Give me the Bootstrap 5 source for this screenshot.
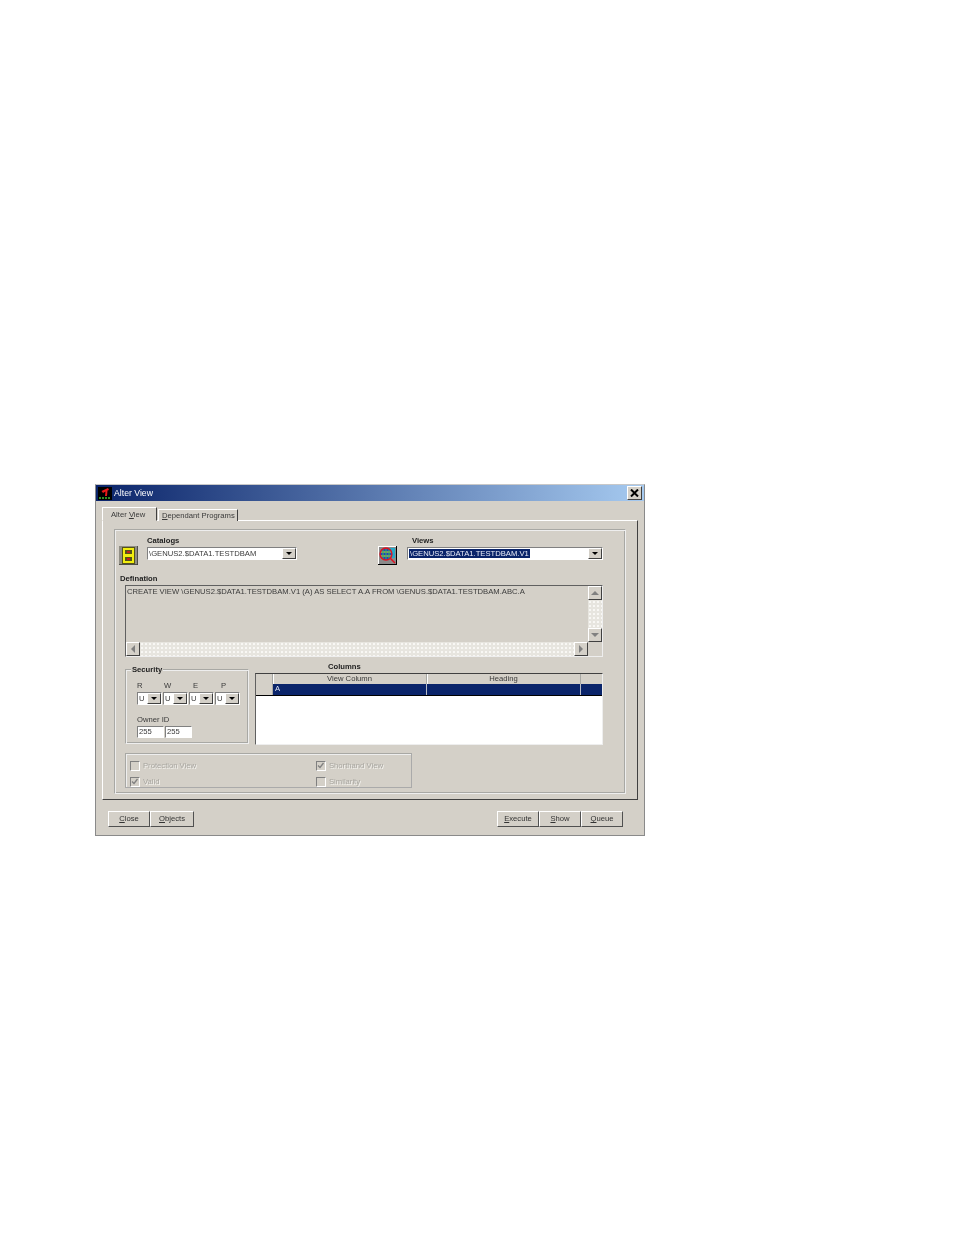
<!DOCTYPE html>
<html lang="en">
<head>
<meta charset="utf-8">
<title>Alter View</title>
<link href="https://cdn.jsdelivr.net/npm/bootstrap@5.3.0/dist/css/bootstrap.min.css" rel="stylesheet">
<style>
:root{--f:#d4d0c8;--d:#808080;--k:#404040;}
html,body{background:#fff;}
body{font-family:"Liberation Sans",Arial,sans-serif;font-size:7.66px;line-height:1;color:#3a3a3a;}
.stage{padding:484px 0 0 95px;}
.win{width:550px;height:352px;background:var(--f);border:1px solid #8a8a8a;border-top-color:#c8c8c8;filter:blur(.25px);}
.ttl{height:16px;background:linear-gradient(90deg,#0a246a,#a6caf0);color:#fff;font-size:8.7px;gap:2px;padding:0 2px 0 2px;}
.closer{width:15px;height:14px;background:var(--f);border:1px solid;border-color:#fff #404040 #404040 #fff;}
.tabrow{margin:6px 0 0 6px;height:14px;}
.tb{position:relative;z-index:2;height:14px;padding:2px 8px 0;background:var(--f);border:1px solid;border-color:#fff #404040 var(--f) #fff;}
.tb-on{width:55px;}
.tb-off{width:80px;height:12px;margin:2px 0 0 1px;border-bottom:0;border-left-color:#fff;padding:0 2px 0 3px;}
.pane{margin:-1px 6px 0 6px;height:280px;border:1px solid;border-color:#fff #404040 #404040 #fff;padding:8px 11px 0 11px;}
.grp{height:265px;border:1px solid;border-color:#a8a8a4 #eee #eee #a8a8a4;box-shadow:inset 1px 1px 0 #eee,inset -1px -1px 0 #a8a8a4;padding:5px 0 0 4px;}
.toprow{height:30px;}
.lbl-b{font-weight:700;height:12px;color:#222;padding-top:2px;}
.ico{width:19px;height:19px;margin-top:11px;display:block;}
.catcol{margin-left:9px;width:150px;}
.viewcol{margin-left:10px;width:196px;}
.ico-v{margin-left:81px;}
.lbl-view{padding-left:5px;}
.combo{height:13px;background:#fff;border:1px solid;border-color:#808080 #fff #fff #808080;padding:0 0 0 1px;}
.cbtxt{flex:1 1 auto;white-space:nowrap;overflow:hidden;line-height:11px;}
.sel{background:#0a246a;color:#e8ecf8;padding:0 1px;}
.arrow{width:14px;height:11px;flex:none;background:var(--f);border:1px solid;border-color:#fff #404040 #404040 #fff;}
.arrow::after{content:"";border:3px solid transparent;border-top:3px solid #000;border-bottom:0;}
.deflbl{margin:9px 0 0 1px;height:11px;padding-top:1px;color:#222;}
.defbox{margin-left:6px;width:478px;height:72px;border:1px solid;border-color:#606060 #eee #eee #606060;padding:0;}
.deftxt{flex:1 1 auto;padding:2px 1px;white-space:nowrap;}
.defmain{height:56px;}
.vbar{width:14px;flex:none;}
.dots{flex:1 1 auto;background-color:#e7e5df;background-image:radial-gradient(#f9f8f5 .7px,transparent .9px);background-size:4px 4px;}
.sb{width:14px;height:14px;flex:none;background:var(--f);border:1px solid;border-color:#fff #404040 #404040 #fff;}
.hbar{height:14px;margin-right:14px;}
.tri-u,.tri-d,.tri-l,.tri-r{width:0;height:0;border:4px solid transparent;}
.tri-u{border-bottom-color:#808080;border-top:0;}
.tri-d{border-top-color:#808080;border-bottom:0;}
.tri-l{border-right-color:#808080;border-left:0;}
.tri-r{border-left-color:#808080;border-right:0;}
.midrow{margin:6px 0 0 6px;height:82px;gap:6px;}
.sec{position:relative;margin-top:6px;width:124px;height:75px;border:1px solid;border-color:#a8a8a4 #eee #eee #a8a8a4;box-shadow:inset 1px 1px 0 #eee,inset -1px -1px 0 #a8a8a4;padding:12px 0 0 11px;}
.legend{position:absolute;top:-4px;left:5px;background:var(--f);padding:0 1px;font-weight:700;color:#222;}
.perm{width:26px;}
.perm-l{height:10px;}
.perm:nth-child(2) .perm-l{padding-left:1px;}
.perm:nth-child(3) .perm-l{padding-left:4px;}
.perm:nth-child(4) .perm-l{padding-left:6px;}
.combo-s{width:25px;}
.own{margin-top:10px;height:10px;padding-top:1px;}
.edits{margin-top:1px;gap:1px;}
.edt{width:27px;height:12px;background:#fff;border:1px solid;border-color:#808080 #fff #fff #808080;padding-left:1px;line-height:10px;}
.colcol{width:348px;}
.collbl{height:10px;color:#222;padding-left:73px;}
.gridbox{height:72px;background:#fff;border:1px solid;border-color:#404040 #eee #eee #606060;}
.gh{height:10px;background:var(--f);}
.gr{height:12px;background:#0a246a;color:#dfe5f5;border-bottom:1px solid #000;}
.gc0{width:17px;border-right:1px solid #a8a8a4;background:var(--f);}
.gc1,.gc2{width:154px;border-right:1px solid #a8a8a4;text-align:center;line-height:10px;}
.gh .gc1,.gh .gc2{box-shadow:inset 1px 0 0 #fff;}
.gr .gc1{text-align:left;padding-left:2px;}
.gr .gc1,.gr .gc2{border-right-color:#b8bcc8;}
.gc3{flex:1 1 auto;}
.opts{margin:8px 0 0 6px;width:287px;height:35px;border:1px solid;border-color:#a8a8a4 #aaa #aaa #a8a8a4;box-shadow:inset 1px 1px 0 #eee;display:grid;grid-template-columns:186px 1fr;padding:7px 0 0 4px;row-gap:6px;}
.opt{gap:3px;height:10px;color:#a8a6a0;text-shadow:1px 1px 0 #f4f3ef;white-space:nowrap;}
.cbx{width:10px;height:10px;background:var(--f);border:1px solid;border-color:#808080 #fff #fff #808080;display:block;flex:none;}
.foot{margin:11px 21px 0 12px;}
.wbtn{height:16px;padding:0;border-radius:0;font-size:7.66px;line-height:1;color:#333;background:var(--f);border:1px solid;border-color:#fff #505050 #505050 #fff;}
.w42{width:42px;}.w44{width:44px;}
</style>
</head>
<body>
<div class="stage">
  <div class="win">
    <div class="ttl d-flex align-items-center">
      <svg width="14" height="13" viewBox="0 0 14 13" aria-hidden="true">
        <rect width="14" height="13" fill="#000"/>
        <path d="M3.500 4 L10 1 L11 3 L9.500 3.500 L9 9 L7 9 L7.500 4.500 L5 6 Z" fill="#e81818"/>
        <path d="M1 11H13" stroke="#3fbf30" stroke-width="1.500" stroke-dasharray="2 1"/>
      </svg>
      <span class="flex-grow-1">Alter View</span>
      <span class="closer d-flex align-items-center justify-content-center">
        <svg width="9" height="8" viewBox="0 0 9 8" aria-hidden="true"><path d="M1 0.500 L8 7.500 M8 0.500 L1 7.500" stroke="#000" stroke-width="2"/></svg>
      </span>
    </div>
    <div class="tabrow d-flex">
      <div class="tb tb-on d-flex align-items-center"><span class="text-nowrap">Alter <u>V</u>iew</span></div>
      <div class="tb tb-off d-flex align-items-center"><span class="text-nowrap"><u>D</u>ependant Programs</span></div>
    </div>
    <div class="pane">
      <div class="grp">
        <div class="toprow d-flex">
          <svg class="ico" viewBox="0 0 19 19" aria-hidden="true">
            <rect width="19" height="19" fill="#8f8d84"/>
            <path d="M0 19H19V0" fill="none" stroke="#3a3a36" stroke-width="1.500"/>
            <rect x="3.500" y="1.500" width="12" height="16" fill="#f2ee10" stroke="#55531a"/>
            <rect x="6" y="4" width="7" height="4" fill="#55531a"/><rect x="8" y="5" width="3" height="2" fill="#c02020"/>
            <rect x="6" y="11" width="7" height="4" fill="#55531a"/><rect x="8" y="12" width="3" height="2" fill="#c02020"/>
          </svg>
          <div class="catcol">
            <div class="lbl-b">Catalogs</div>
            <div class="combo d-flex align-items-center"><span class="cbtxt">\GENUS2.$DATA1.TESTDBAM</span><span class="arrow d-flex align-items-center justify-content-center"></span></div>
          </div>
          <svg class="ico ico-v" viewBox="0 0 19 19" aria-hidden="true">
            <rect width="19" height="19" fill="#8a8a8a"/><rect x="0" y="0" width="19" height="1" fill="#fff"/><rect x="0" y="0" width="1" height="19" fill="#fff"/><rect x="18" y="0" width="1" height="19" fill="#000"/><rect x="0" y="18" width="19" height="1" fill="#000"/>
            <rect x="10" y="2" width="7" height="10" fill="#22a8c8"/>
            <circle cx="8" cy="8" r="6" fill="#2040c0"/>
            <path d="M2 6H14M2 10H14" stroke="#e8e020" stroke-width="1"/>
            <path d="M5 2.500V13.500M8 2V14M11 2.500V13.500" stroke="#30c050" stroke-width="1"/>
            <circle cx="8" cy="8" r="6" fill="none" stroke="#e01020" stroke-width="1.300"/>
            <path d="M12 12 L17 17" stroke="#e01020" stroke-width="1.500"/>
          </svg>
          <div class="viewcol">
            <div class="lbl-b lbl-view">Views</div>
            <div class="combo d-flex align-items-center"><span class="cbtxt"><span class="sel">\GENUS2.$DATA1.TESTDBAM.V1</span></span><span class="arrow d-flex align-items-center justify-content-center"></span></div>
          </div>
        </div>
        <div class="deflbl fw-bold">Defination</div>
        <div class="defbox">
          <div class="defmain d-flex">
            <div class="deftxt">CREATE VIEW \GENUS2.$DATA1.TESTDBAM.V1 (A) AS SELECT A.A FROM \GENUS.$DATA1.TESTDBAM.ABC.A</div>
            <div class="vbar d-flex flex-column">
              <span class="sb d-flex align-items-center justify-content-center"><span class="tri-u"></span></span>
              <span class="dots"></span>
              <span class="sb d-flex align-items-center justify-content-center"><span class="tri-d"></span></span>
            </div>
          </div>
          <div class="hbar d-flex">
            <span class="sb d-flex align-items-center justify-content-center"><span class="tri-l"></span></span>
            <span class="dots"></span>
            <span class="sb d-flex align-items-center justify-content-center"><span class="tri-r"></span></span>
          </div>
        </div>
        <div class="midrow d-flex">
          <div class="sec">
            <span class="legend">Security</span>
            <div class="d-flex">
              <div class="perm"><div class="perm-l">R</div><div class="combo combo-s d-flex align-items-center"><span class="cbtxt">U</span><span class="arrow d-flex align-items-center justify-content-center"></span></div></div>
              <div class="perm"><div class="perm-l">W</div><div class="combo combo-s d-flex align-items-center"><span class="cbtxt">U</span><span class="arrow d-flex align-items-center justify-content-center"></span></div></div>
              <div class="perm"><div class="perm-l">E</div><div class="combo combo-s d-flex align-items-center"><span class="cbtxt">U</span><span class="arrow d-flex align-items-center justify-content-center"></span></div></div>
              <div class="perm"><div class="perm-l">P</div><div class="combo combo-s d-flex align-items-center"><span class="cbtxt">U</span><span class="arrow d-flex align-items-center justify-content-center"></span></div></div>
            </div>
            <div class="own">Owner ID</div>
            <div class="edits d-flex"><div class="edt">255</div><div class="edt">255</div></div>
          </div>
          <div class="colcol">
            <div class="collbl fw-bold">Columns</div>
            <div class="gridbox">
              <div class="gh d-flex"><div class="gc0"></div><div class="gc1">View Column</div><div class="gc2">Heading</div><div class="gc3"></div></div>
              <div class="gr d-flex"><div class="gc0"></div><div class="gc1">A</div><div class="gc2"></div><div class="gc3"></div></div>
            </div>
          </div>
        </div>
        <div class="opts">
          <div class="opt d-flex align-items-center"><span class="cbx"></span>Protection View</div>
          <div class="opt d-flex align-items-center"><svg class="cbx" viewBox="0 0 8 8" aria-hidden="true"><path d="M1 3.500 L3 5.500 L6.500 1" fill="none" stroke="#808080" stroke-width="1.300"/></svg>Shorthand View</div>
          <div class="opt d-flex align-items-center"><svg class="cbx" viewBox="0 0 8 8" aria-hidden="true"><path d="M1 3.500 L3 5.500 L6.500 1" fill="none" stroke="#808080" stroke-width="1.300"/></svg>Valid</div>
          <div class="opt d-flex align-items-center"><span class="cbx"></span>Similarity</div>
        </div>
      </div>
    </div>
    <div class="foot d-flex justify-content-between">
      <div class="d-flex">
        <button type="button" class="btn wbtn w42"><u>C</u>lose</button>
        <button type="button" class="btn wbtn w44"><u>O</u>bjects</button>
      </div>
      <div class="d-flex">
        <button type="button" class="btn wbtn w42"><u>E</u>xecute</button>
        <button type="button" class="btn wbtn w42"><u>S</u>how</button>
        <button type="button" class="btn wbtn w42"><u>Q</u>ueue</button>
      </div>
    </div>
  </div>
</div>
<script src="https://cdn.jsdelivr.net/npm/bootstrap@5.3.0/dist/js/bootstrap.bundle.min.js"></script>
</body>
</html>
